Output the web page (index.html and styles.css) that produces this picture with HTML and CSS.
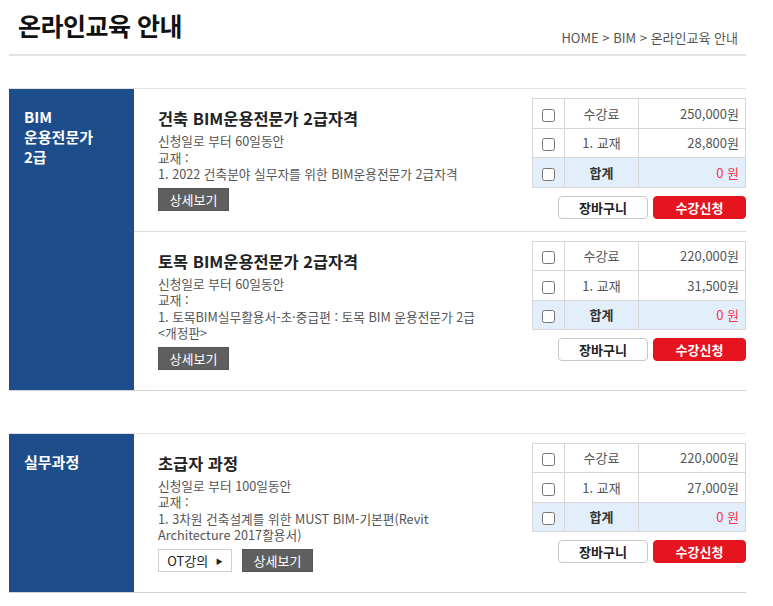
FILE: index.html
```html
<!DOCTYPE html>
<html lang="ko">
<head>
<meta charset="utf-8">
<title>온라인교육 안내</title>
<link rel="stylesheet" href="styles.css">
</head>
<body>
<div class="page">
  <header class="head">
    <h1 class="head-title">온라인교육 안내</h1>
    <div class="crumb">HOME &gt; BIM &gt; 온라인교육 안내</div>
  </header>

  <section class="group">
    <div class="side">BIM<br>운용전문가<br>2급</div>
    <div class="items">
      <div class="item">
        <div class="info">
          <h2 class="item-title">건축 BIM운용전문가 2급자격</h2>
          <p class="desc">신청일로 부터 60일동안</p>
          <p class="desc">교재 :</p>
          <p class="desc">1. 2022 건축분야 실무자를 위한 BIM운용전문가 2급자격</p>
          <div class="btns"><button class="btn-detail">상세보기</button></div>
        </div>
        <div class="order">
          <table class="price">
            <tr><td class="chk"><input type="checkbox"></td><td class="lbl">수강료</td><td class="amt">250,000원</td></tr>
            <tr><td class="chk"><input type="checkbox"></td><td class="lbl">1. 교재</td><td class="amt">28,800원</td></tr>
            <tr class="sum"><td class="chk"><input type="checkbox"></td><td class="lbl">합계</td><td class="amt"><span class="zero">0 원</span></td></tr>
          </table>
          <div class="actions"><button class="btn-cart">장바구니</button><button class="btn-apply">수강신청</button></div>
        </div>
      </div>
      <div class="item">
        <div class="info">
          <h2 class="item-title">토목 BIM운용전문가 2급자격</h2>
          <p class="desc">신청일로 부터 60일동안</p>
          <p class="desc">교재 :</p>
          <p class="desc">1. 토목BIM실무활용서-초·중급편 : 토목 BIM 운용전문가 2급 <span class="nowrap">&lt;개정판&gt;</span></p>
          <div class="btns"><button class="btn-detail">상세보기</button></div>
        </div>
        <div class="order">
          <table class="price">
            <tr><td class="chk"><input type="checkbox"></td><td class="lbl">수강료</td><td class="amt">220,000원</td></tr>
            <tr><td class="chk"><input type="checkbox"></td><td class="lbl">1. 교재</td><td class="amt">31,500원</td></tr>
            <tr class="sum"><td class="chk"><input type="checkbox"></td><td class="lbl">합계</td><td class="amt"><span class="zero">0 원</span></td></tr>
          </table>
          <div class="actions"><button class="btn-cart">장바구니</button><button class="btn-apply">수강신청</button></div>
        </div>
      </div>
    </div>
  </section>

  <section class="group group-2">
    <div class="side">실무과정</div>
    <div class="items">
      <div class="item">
        <div class="info">
          <h2 class="item-title">초급자 과정</h2>
          <p class="desc">신청일로 부터 100일동안</p>
          <p class="desc">교재 :</p>
          <p class="desc">1. 3차원 건축설계를 위한 MUST BIM-기본편(Revit Architecture 2017활용서)</p>
          <div class="btns"><button class="btn-ot">OT강의 <span class="tri">▶</span></button><button class="btn-detail">상세보기</button></div>
        </div>
        <div class="order">
          <table class="price">
            <tr><td class="chk"><input type="checkbox"></td><td class="lbl">수강료</td><td class="amt">220,000원</td></tr>
            <tr><td class="chk"><input type="checkbox"></td><td class="lbl">1. 교재</td><td class="amt">27,000원</td></tr>
            <tr class="sum"><td class="chk"><input type="checkbox"></td><td class="lbl">합계</td><td class="amt"><span class="zero">0 원</span></td></tr>
          </table>
          <div class="actions"><button class="btn-cart">장바구니</button><button class="btn-apply">수강신청</button></div>
        </div>
      </div>
    </div>
  </section>
</div>
</body>
</html>
```

FILE: styles.css
```css
* { box-sizing: border-box; }
body {
  margin: 0;
  background: #fff;
  font-family: "Noto Sans CJK KR", "Noto Sans", sans-serif;
  color: #333;
}
.page {
  width: 737px;
  margin: 0 0 0 9px;
}
.head {
  display: flex;
  justify-content: space-between;
  align-items: flex-start;
  height: 56px;
  padding: 0 8px 0 9px;
  border-bottom: 2px solid #e2e2e2;
}
.head-title {
  margin: 9px 0 0;
  font-size: 25px;
  line-height: 32px;
  font-weight: 700;
  color: #111;
  letter-spacing: -0.5px;
}
.crumb {
  margin-top: 30px;
  font-size: 13px;
  line-height: 16px;
  color: #555;
}
.group {
  display: flex;
  margin-top: 32px;
  border-top: 1px solid #e3e3e3;
  border-bottom: 1px solid #d2d2d2;
}
.group-2 { margin-top: 42px; }
.side {
  width: 125px;
  flex: none;
  background: #1d4e8b;
  color: #fff;
  font-size: 15px;
  font-weight: 700;
  line-height: 20px;
  padding: 18px 10px 0 15px;
}
.items { flex: 1; }
.item {
  display: flex;
  padding-left: 24px;
}
.item + .item { border-top: 1px solid #dcdcdc; }
.info {
  flex: 1;
  padding: 18px 0 20px;
  min-width: 0;
}
.item-title {
  margin: 0 0 4px;
  font-size: 16.4px;
  line-height: 22px;
  font-weight: 700;
  color: #222;
}
.desc {
  margin: 0;
  padding-right: 28px;
  font-size: 12.7px;
  line-height: 16.5px;
  color: #555;
  word-break: keep-all;
}
.nowrap { white-space: nowrap; }
.btns {
  display: flex;
  gap: 10px;
  margin-top: 5px;
}
.btn-detail {
  width: 71px;
  height: 23px;
  padding: 0;
  border: 1px solid #555;
  background: #5f5f5f;
  color: #fff;
  font-family: inherit;
  font-size: 13px;
  line-height: 21px;
}
.btn-ot {
  width: 74px;
  height: 23px;
  padding: 0;
  border: 1px solid #cfcfcf;
  background: #fff;
  color: #222;
  font-family: inherit;
  font-size: 13px;
  line-height: 21px;
}
.tri {
  font-size: 7px;
  vertical-align: 2px;
  margin-left: 4px;
}
.order {
  width: 214px;
  flex: none;
  margin-left: 8px;
  padding: 9px 0 12px;
}
.price {
  width: 214px;
  border-collapse: collapse;
  font-size: 13px;
  color: #555;
}
.price td {
  border: 1px solid #d6d6d6;
  height: 29.5px;
  padding: 0;
}
.chk { width: 32px; text-align: center; }
.chk input {
  margin: 0;
  width: 13px;
  height: 13px;
  vertical-align: middle;
}
.lbl { width: 74px; text-align: center; }
.amt { text-align: right; padding-right: 6px !important; }
.sum td { background: #e3eefb; }
.sum .lbl { font-weight: 700; color: #333; }
.zero { color: #f0364e; }
.actions {
  display: flex;
  justify-content: flex-end;
  gap: 5px;
  margin-top: 8px;
}
.btn-cart, .btn-apply {
  height: 23px;
  padding: 0;
  border-radius: 4px;
  font-family: inherit;
  font-size: 13px;
  font-weight: 700;
  line-height: 21px;
}
.btn-cart {
  width: 90px;
  border: 1px solid #c8c8c8;
  background: #fff;
  color: #222;
}
.btn-apply {
  width: 93px;
  border: 1px solid #e3141e;
  background: #e5141f;
  color: #fff;
}
```
